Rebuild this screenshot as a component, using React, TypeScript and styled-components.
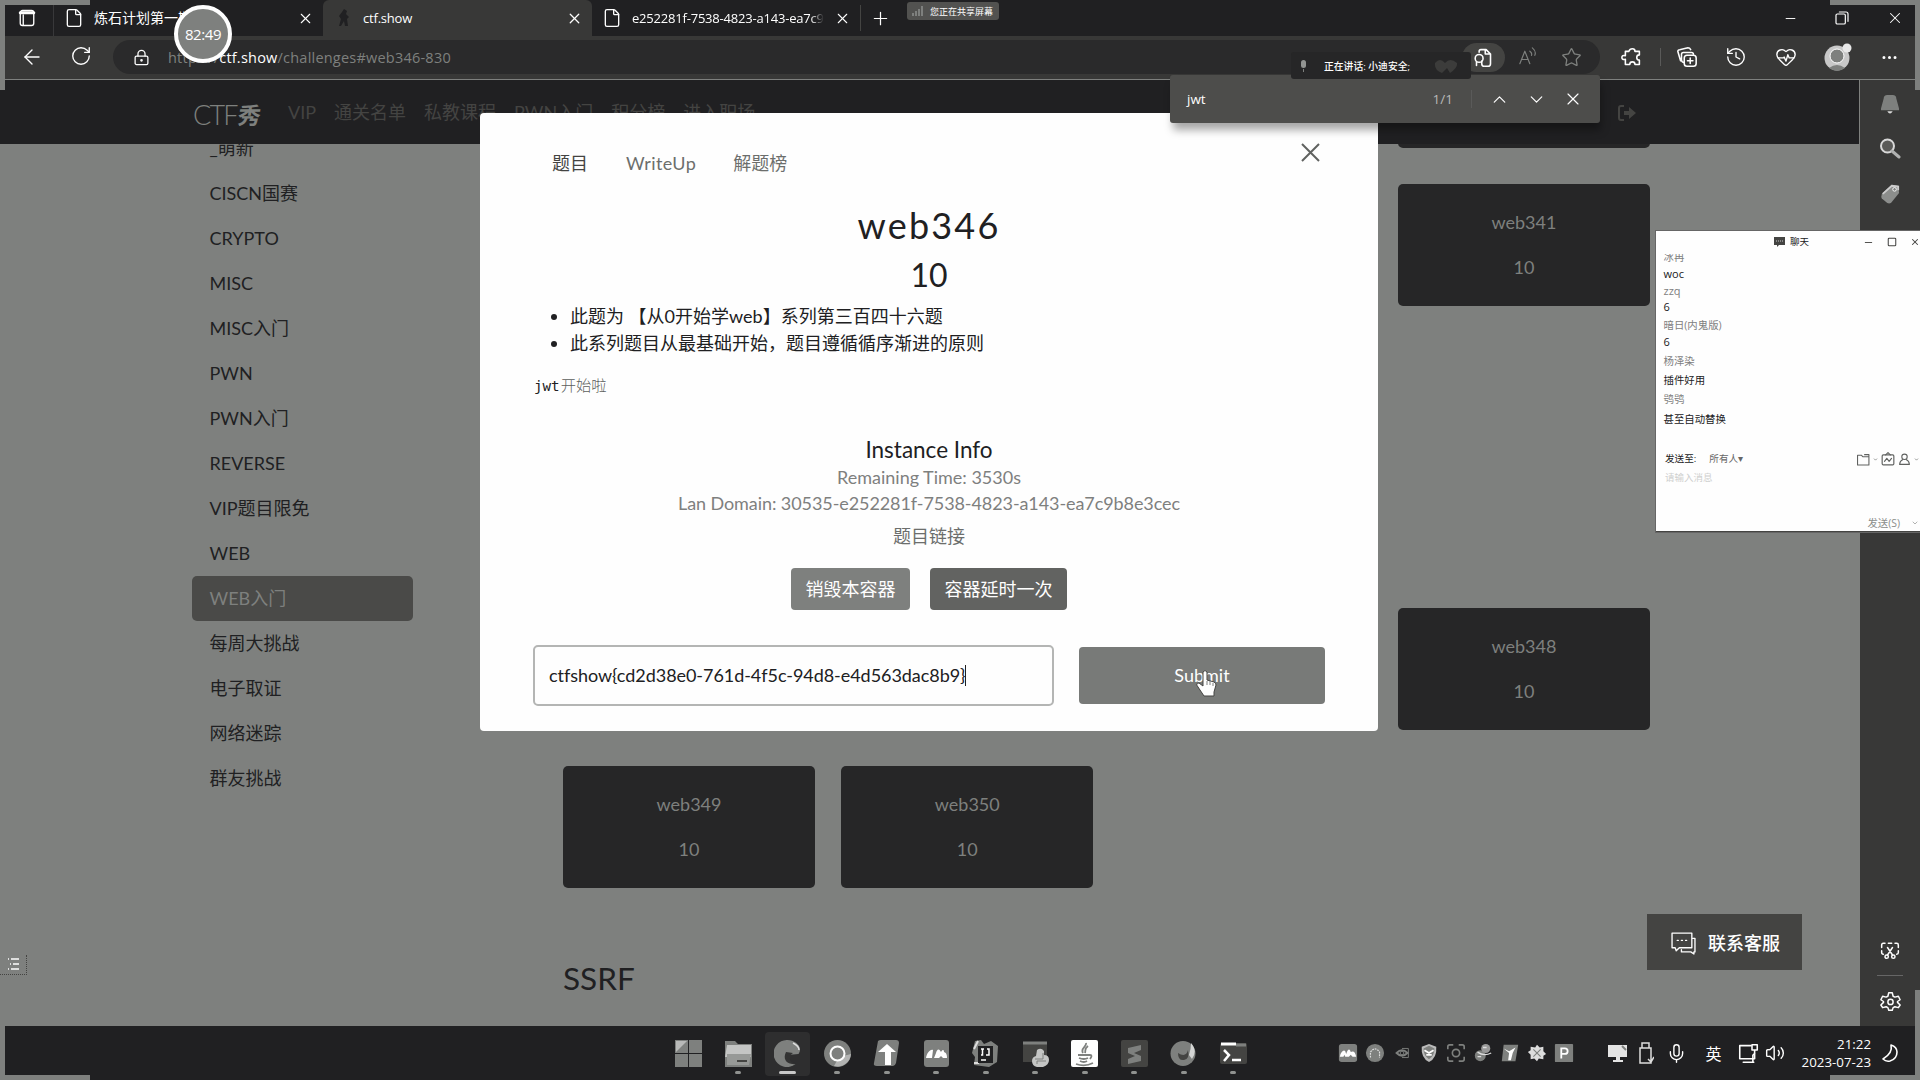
import React from "react";
import styled, { createGlobalStyle } from "styled-components";
import {
  File, X, Plus, ArrowLeft, RotateCw, LockKeyhole, Star, History, HeartPulse,
  Ellipsis, ChevronUp, ChevronDown, Minus, Mic, Volume2, Square,
} from "lucide-react";

const ink = "#202022";
const slate = "#444442";
const gray = "#7e807e";
const white = "#fefefe";
const ui = `"Open Sans", "Noto Sans CJK SC", sans-serif`;
const page = `Lato, "Noto Sans CJK SC", sans-serif`;

const Global = createGlobalStyle`
  * { box-sizing: border-box; }
  html, body { margin: 0; padding: 0; background: ${gray}; overflow: hidden; }
  button, input { font: inherit; border: 0; margin: 0; }
  svg { display: block; flex: none; }
`;

const Desktop = styled.div`
  position: relative;
  width: 1920px;
  height: 1080px;
  display: flex;
  flex-direction: column;
  overflow: hidden;
  background: ${gray};
  color: ${white};
  font-family: ${ui};
`;

const TabStrip = styled.header`
  display: flex;
  height: 36px;
  background: ${ink};
  align-items: stretch;
  font-size: 13px;
`;
const StripLead = styled.div`
  width: 54px;
  padding: 9px 0 0 18px;
  border-right: 1px solid #38383a;
`;
const Tab = styled.div<{ $w: number; $on?: boolean; $pad: number }>`
  display: flex;
  align-items: center;
  width: ${(p) => p.$w}px;
  padding: 0 9px 0 ${(p) => p.$pad}px;
  gap: 10px;
  background: ${(p) => (p.$on ? "#383837" : ink)};
  border-radius: ${(p) => (p.$on ? "6px 6px 0 0" : "0")};
`;
const TabTitle = styled.span<{ $fade?: boolean; $ls?: number; $size?: number }>`
  flex: 1;
  overflow: hidden;
  white-space: nowrap;
  line-height: 22px;
  font-size: ${(p) => p.$size ?? 13}px;
  letter-spacing: ${(p) => p.$ls ?? 0}px;
  mask-image: ${(p) => (p.$fade ? "linear-gradient(90deg,#000 93%,transparent)" : "none")};
`;
const StripAdd = styled.div`
  display: flex;
  align-items: center;
  width: 44px;
  height: 26px;
  margin-top: 5px;
  padding-left: 9px;
  border-left: 1px solid ${slate};
`;
const WindowButtons = styled.div`
  display: flex;
  align-items: center;
  gap: 36px;
  margin-left: auto;
  padding-right: 16px;
`;

const Toolbar = styled.div`
  display: flex;
  align-items: center;
  height: 44px;
  padding: 0 0 1px 20px;
  background: #383837;
  border-bottom: 1px solid ${gray};
`;
const NavButtons = styled.div`
  display: flex;
  width: 93px;
  gap: 26px;
`;
const AddressBar = styled.div`
  display: flex;
  flex: none;
  align-items: center;
  width: 1487px;
  height: 34px;
  padding: 0 18px 0 20px;
  border-radius: 17px;
  background: #2a2a2b;
`;
const Url = styled.span`
  margin: 1px 0 0 18px;
  color: ${gray};
  font-size: 14.5px;
  letter-spacing: 0.22px;
  line-height: 22px;
  b { color: ${white}; font-weight: 400; }
`;
const AddressTools = styled.div`
  display: flex;
  align-items: center;
  gap: 22px;
  margin-left: auto;
  color: ${gray};
`;
const FindChip = styled.div`
  display: flex;
  align-items: center;
  justify-content: center;
  width: 43px;
  height: 29px;
  margin-right: -8px;
  border-radius: 15px;
  background: ${slate};
  color: ${white};
`;
const ToolIcons = styled.div`
  display: grid;
  grid-template-columns: 22px 36px 18px 80px 20px 84px 18px;
  align-items: center;
  justify-items: center;
  height: 30px;
  padding-left: 20px;
`;
const Rule = styled.i`
  width: 1px;
  height: 18px;
  background: #5a5a59;
`;

const Body = styled.div`
  display: flex;
  height: 946px;
`;
const WebPage = styled.div`
  width: 1860px;
  border-right: 1px solid ${gray};
  background: ${gray};
  font-family: ${page};
  font-size: 18px;
  color: ${ink};
`;
const SiteNav = styled.nav`
  display: flex;
  align-items: center;
  height: 64px;
  padding: 1px 223px 0 193px;
  background: ${ink};
  color: ${slate};
  gap: 18px;
  line-height: 27px;
`;
const Logo = styled.div`
  display: flex;
  align-items: center;
  width: 77px;
  padding-top: 3px;
  color: ${gray};
  font-size: 27px;
  font-weight: 300;
  line-height: 27px;
  letter-spacing: -1.8px;
  em { font-family: "Noto Sans CJK SC"; font-style: normal; font-weight: 700; font-size: 23px; margin-left: 1px; transform: skewX(-8deg); }
`;
const LogOut = styled.div`
  margin-left: auto;
`;
const Columns = styled.div`
  display: flex;
  height: 882px;
  overflow: hidden;
`;
const Side = styled.aside`
  width: 221px;
  margin: -18px 0 0 192px;
`;
const SideItem = styled.div<{ $on?: boolean }>`
  height: 45px;
  padding: 9px 17.5px;
  line-height: 27px;
  border-radius: 5px;
  white-space: nowrap;
  background: ${(p) => (p.$on ? "#4a4a48" : "transparent")};
  color: ${(p) => (p.$on ? gray : ink)};
`;
const Board = styled.main`
  width: 1087px;
  margin-left: 150px;
`;
const CardGrid = styled.div`
  display: grid;
  grid-template-columns: repeat(4, 252px);
  column-gap: 26.3px;
  row-gap: 36px;
  grid-auto-rows: 122px;
`;
const FirstGrid = styled(CardGrid)`
  margin-top: -118px;
  height: 438px;
`;
const SecondGrid = styled(CardGrid)`
  margin-top: 144px;
`;
const Card = styled.article<{ $col: number; $row: number }>`
  grid-column: ${(p) => p.$col};
  grid-row: ${(p) => p.$row};
  display: flex;
  flex-direction: column;
  align-items: center;
  padding-top: 25px;
  gap: 18px;
  border-radius: 5px;
  background: #262627;
  color: ${gray};
  line-height: 27px;
`;
const Heading = styled.h3`
  margin: 71px 0 0;
  font-weight: 400;
  font-size: 31.5px;
  line-height: 38px;
`;
const EdgeBar = styled.aside`
  display: flex;
  flex-direction: column;
  align-items: center;
  flex: 1;
  padding: 14px 0 14px 0;
  background: #383837;
  gap: 23px;
`;
const EdgeBottom = styled.div`
  display: flex;
  flex-direction: column;
  align-items: center;
  gap: 15px;
  margin-top: auto;
`;
const EdgeRule = styled.i`
  width: 26px;
  height: 1px;
  background: #666;
`;

const Taskbar = styled.footer`
  display: flex;
  height: 54px;
  background: ${ink};
  padding-left: 664px;
`;
const Apps = styled.div`
  display: flex;
  padding-top: 6px;
`;
const AppSlot = styled.div<{ $on?: boolean }>`
  display: flex;
  flex-direction: column;
  align-items: center;
  width: 45px;
  height: 44px;
  margin: 0 2.25px;
  padding-top: 8px;
  border-radius: 4px;
  background: ${(p) => (p.$on ? "#2e2e2f" : "transparent")};
`;
const Dot = styled.i<{ $on?: boolean }>`
  width: ${(p) => (p.$on ? 17 : 6)}px;
  height: 3px;
  margin-top: 4px;
  border-radius: 2px;
  background: ${(p) => (p.$on ? "#c8c8c8" : "#909290")};
`;
const Tray = styled.div`
  display: flex;
  align-items: center;
  gap: 7px;
  margin-left: 80px;
`;
const Status = styled.div`
  display: grid;
  grid-template-columns: 20px 37px 25px 49px 20px 34px;
  align-items: center;
  justify-items: center;
  margin-left: 33px;
  font-size: 16px;
`;
const Clock = styled.time`
  margin-left: auto;
  padding: 9px 10px 0 0;
  text-align: right;
  font-size: 13.3px;
  line-height: 18px;
`;
const MoonSlot = styled.div`
  padding: 17px 21px 0 0;
`;

const Modal = styled.section`
  position: absolute;
  left: 480px;
  top: 113px;
  width: 898px;
  height: 618px;
  padding: 37px 53px 0;
  border-radius: 4px;
  background: ${white};
  color: ${ink};
  font-family: ${page};
  font-size: 18px;
  line-height: 27px;
`;
const ModalTop = styled.div`
  display: flex;
  padding-left: 19px;
  gap: 37px;
  color: #6c6e6c;
  span:first-child { color: ${slate}; }
  span:nth-child(2) { letter-spacing: 0.4px; margin-left: 1px; }
`;
const CloseSlot = styled.div`
  margin: -11px 0 0 auto;
  color: #606260;
`;
const Title = styled.h1`
  margin: 26px 0 0;
  text-align: center;
  font-weight: 400;
  font-size: 36px;
  letter-spacing: 2.2px;
  line-height: 44px;
`;
const Points = styled.h2`
  margin: 8px 0 0;
  text-align: center;
  font-weight: 400;
  font-size: 32px;
  line-height: 40px;
`;
const Notes = styled.ul`
  margin: 8px 0 0;
  padding-left: 37px;
`;
const Pre = styled.div`
  margin-top: 14px;
  height: 27px;
  padding-left: 1px;
  font-family: "DejaVu Sans Mono", monospace;
  font-size: 14.2px;
  span { margin-left: 1px; font-family: "Noto Sans CJK SC"; font-weight: 300; font-size: 15.3px; color: #5c5e5c; }
`;
const Info = styled.div`
  display: flex;
  flex-direction: column;
  align-items: center;
  margin-top: 38px;
  color: ${gray};
  strong { color: ${ink}; font-weight: 400; font-size: 22.5px; line-height: 27px; margin-bottom: 1px; }
  a { margin-top: 7px; color: #6c6e6c; }
`;
const Line = styled.span<{ $ls?: number }>`
  line-height: 26px;
  letter-spacing: ${(p) => p.$ls ?? 0}px;
`;
const Actions = styled.div`
  display: flex;
  justify-content: center;
  gap: 20px;
  margin-top: 18px;
`;
const Action = styled.button<{ $dark?: boolean }>`
  height: 42px;
  padding: 0 14.5px;
  border-radius: 4px;
  color: ${white};
  background: ${(p) => (p.$dark ? "#626361" : gray)};
`;
const FlagRow = styled.div`
  display: flex;
  align-items: center;
  justify-content: space-between;
  margin-top: 35px;
`;
const Flag = styled.div`
  display: flex;
  align-items: center;
  width: 521px;
  height: 61px;
  padding-left: 14px;
  border: 2px solid #b4b5b4;
  border-radius: 5px;
  letter-spacing: -0.05px;
`;
const Caret = styled.i`
  width: 1px;
  height: 21px;
  background: ${ink};
`;
const Submit = styled.button`
  width: 246px;
  height: 57px;
  border-radius: 4px;
  background: #787a78;
  color: ${white};
`;

const FindBar = styled.div`
  position: absolute;
  left: 1170px;
  top: 75px;
  width: 430px;
  height: 48px;
  display: flex;
  align-items: center;
  padding: 0 17px;
  border-radius: 3px;
  background: #4d4d4b;
  box-shadow: 2px 8px 9px -1px rgba(0, 0, 0, 0.35);
  font-size: 13.5px;
`;
const Count = styled.span`
  margin: 0 18px 0 auto;
  color: #b8b8b8;
`;
const FindIcons = styled.div`
  display: flex;
  gap: 16px;
  padding-left: 17px;
`;
const Speaking = styled.div`
  position: absolute;
  left: 1291px;
  top: 52px;
  width: 180px;
  height: 27px;
  display: flex;
  align-items: center;
  gap: 14px;
  padding-left: 6px;
  border-radius: 3px;
  background: #262627;
  font-size: 9.8px;
  font-weight: 500;
  span { width: 84px; white-space: nowrap; }
`;
const SharePill = styled.div`
  position: absolute;
  left: 907px;
  top: 2px;
  width: 92px;
  height: 18px;
  display: flex;
  align-items: center;
  gap: 6px;
  padding-left: 5px;
  border-radius: 3px;
  background: #525250;
  font-size: 9px;
`;
const Timer = styled.div`
  position: absolute;
  left: 174px;
  top: 5px;
  width: 58px;
  height: 58px;
  border: 4px solid ${white};
  border-radius: 50%;
  background: ${gray};
  text-align: center;
  font-size: 15px;
  line-height: 50px;
  letter-spacing: -0.4px;
`;
const Contact = styled.button`
  position: absolute;
  left: 1647px;
  top: 914px;
  width: 155px;
  height: 56px;
  display: flex;
  align-items: center;
  gap: 12px;
  padding: 0 0 0 24px;
  background: ${slate};
  color: ${white};
  font-family: ${page};
  font-size: 18px;
  font-weight: 500;
`;
const ListToggle = styled.div`
  position: absolute;
  left: 0;
  top: 955px;
  width: 27px;
  height: 20px;
  padding: 3px 0 0 8px;
  border-right: 1px dotted ${slate};
  border-bottom: 1px dotted ${slate};
`;
const Corner = styled.i<{ $v: "top" | "bottom"; $h: "left" | "right" }>`
  position: absolute;
  ${(p) => p.$v}: 0;
  ${(p) => p.$h}: 0;
  width: 90px;
  height: 90px;
  border: 0 solid ${gray};
  border-${(p) => p.$v}-width: 5px;
  border-${(p) => p.$h}-width: 5px;
`;
const Hand = styled.svg`
  position: absolute;
  left: 1195px;
  top: 669px;
`;

const Chat = styled.section`
  position: absolute;
  left: 1656px;
  top: 231px;
  width: 264px;
  height: 301px;
  display: flex;
  flex-direction: column;
  background: ${white};
  color: ${ink};
  font-size: 10.4px;
  line-height: 14px;
  border-bottom: 1px solid ${slate};
  outline: 1px solid #666;
`;
const ChatHead = styled.div`
  display: flex;
  align-items: center;
  height: 22px;
  padding-left: 118px;
  gap: 5px;
  font-size: 9.5px;
`;
const ChatWindow = styled.div`
  display: flex;
  gap: 13px;
  margin-left: auto;
  color: ${slate};
`;
const Messages = styled.div`
  height: 190px;
  padding-left: 7.5px;
  overflow: hidden;
`;
const Message = styled.div<{ $h: number; $name?: boolean; $latin?: boolean }>`
  height: ${(p) => p.$h}px;
  line-height: ${(p) => p.$h - (p.$latin ? 2 : 0)}px;
  font-size: ${(p) => (p.$latin ? 11 : 10.4)}px;
  color: ${(p) => (p.$name ? "#7e807e" : ink)};
  &:first-child { margin-top: -5px; clip-path: inset(6px 0 0 0); }
`;
const SendTo = styled.div`
  display: flex;
  align-items: center;
  height: 18px;
  margin-top: 7px;
  padding: 0 1px 0 9px;
  font-size: 9.6px;
  span { margin-left: 13px; color: #666; }
`;
const SendTools = styled.div`
  display: flex;
  align-items: center;
  gap: 3px;
  margin-left: auto;
  color: #606260;
`;
const Hint = styled.div`
  padding-left: 9px;
  margin-top: 3px;
  font-size: 9.5px;
  color: #cfd0cf;
`;
const Send = styled.div`
  display: flex;
  align-items: center;
  gap: 11px;
  margin: auto 1px 1px auto;
  color: #8b8d8b;
`;

const Svg = ({ s = 24, children, sw = 1.4 }: { s?: number; children: React.ReactNode; sw?: number }) => (
  <svg width={s} height={s} viewBox="0 0 24 24" fill="none" stroke="currentColor" strokeWidth={sw} strokeLinecap="round" strokeLinejoin="round">{children}</svg>
);

const appIcons = [
  <g fill={gray}><path d="M0 0h13v13H0zM14 0h13v13H14zM0 14h13v13H0zM14 14h13v13H14z" /><path d="M1 1h11L1 12z" fill="#b8b9b8" /></g>,
  <g><path d="M0 1h10l3 3h14v23H0z" fill={gray} /><path d="M2 5h24v12H0z" fill="#c4c5c4" /><path d="M2 14h24l-2 11H2z" fill="#979997" /><path d="M12 21h10" stroke={slate} strokeWidth="2" /></g>,
  <g><path d="M13.500 0a13.500 13.500 0 1 0 8 24c-5 1-9-3-8-9l11-1c5-7-3-14-11-14z" fill={gray} /><path d="M12 12c-4 8 2 14 10 11-8 1-7-8-3-10z" fill="#333" /><path d="M19 3q6 3 6 7" stroke="#ddd" strokeWidth="1.500" fill="none" /></g>,
  <g><circle cx="13.500" cy="13.500" r="13.500" fill={gray} /><path d="M27 14a13.500 13.500 0 0 1-17 12l5-9z" fill="#b2b3b2" /><circle cx="13.500" cy="13.500" r="7" fill={gray} stroke={white} strokeWidth="2" /></g>,
  <g><path d="M5 1q1-1 3-1h15q3 0 3 3l-3 20q-1 3-3 3H4q-4 0-3-3z" fill={gray} /><path d="M14 4l9 8h-5v13h-6V12H5z" fill={white} /></g>,
  <g><rect x="1" y="0" width="25" height="27" rx="3" fill={gray} /><path d="M3 18c1-5 4-9 7-8l-1 8zM11 18l2-5c1-4 3-5 5-1 2-3 3-2 3 0 3 1 3 4 3 6h-4l-2-2-2 2z" fill={white} /></g>,
  <g><path d="M3 1l6-1 3 4 7-3 7 5-1 16-8 5-15-2 1-8-3-4z" fill={gray} /><path d="M2 9L6 1M2 23h5" stroke="#ddd" strokeWidth="2" /><rect x="6" y="6" width="15" height="17" fill={ink} /><path d="M9 9h3m-1.500 0v6H9m6-6h2v6h-3M9 20h5" stroke={white} strokeWidth="1.500" fill="none" /></g>,
  <g><rect x="1" y="2" width="24" height="20" fill={slate} /><path d="M1 3h24" stroke={gray} strokeWidth="3" /><path d="M15 10q4-3 7 1v4q5 0 5 5t-6 7h-6q-5-1-5-6 0-4 4-5z" fill="#c4c5c4" /><path d="M13 19h8v-6M15 24v-3h9" stroke={gray} fill="none" /></g>,
  <g><rect width="27" height="27" rx="2" fill={white} /><path d="M15 3c1 4-6 5-3 10m5-7c-4 3-2 4-3 7M7 15h12q3 0 0 4M8 18q5 2 9 0M9 21q4 2 7 0M5 24q9 3 17-1" stroke={gray} strokeWidth="1.800" fill="none" /></g>,
  <g><rect width="27" height="27" rx="2" fill={slate} /><path d="M20 5v5l-7 3 7 3v5L7 24v-5l7-3-7-3V8z" fill={gray} /></g>,
  <g><circle cx="13" cy="13.500" r="12.500" fill={gray} /><path d="M21 3q7 8 1 16l-3-4q2-6 2-12z" fill="#d4d5d4" /><path d="M8 13q8 5 10-3 2 9-4 10t-6-7z" fill={slate} /></g>,
  <g><rect y="3" width="27" height="21" rx="2" fill={slate} /><path d="M1 4h15" stroke={white} strokeWidth="3" /><path d="M16 5h10" stroke={gray} strokeWidth="3" /><path d="M4 10l5 5-5 6M12 20h9" stroke={white} strokeWidth="2.500" fill="none" /></g>,
];

const trayIcons = [
  <g><rect width="20" height="20" rx="3" fill={gray} /><path d="M1 14c1-5 4-8 6-6l1 3c2-6 4-6 5-2 3-2 5 0 6 5h-4l-2-2-2 2H7l-1-2-1 2z" fill={white} /></g>,
  <g><circle cx="10" cy="10" r="10" fill={gray} /><path d="M5 15V9q5-7 10 0v6" stroke="#ddd" strokeWidth="1.300" fill="none" strokeDasharray="2 1" /></g>,
  <g stroke={gray} fill="none"><path d="M4 10q6-6 12 0-6 6-12 0z" strokeWidth="2" /><circle cx="10" cy="10" r="2" /><path d="M10 5h7v10h-7" /></g>,
  <g><path d="M10 0l8 3q1 12-8 17Q1 15 2 3z" fill="#bbb" /><path d="M10 2l6 3q0 8-6 12Q4 13 4 5z" fill={gray} /><path d="M5 7l5 3 5-3M7 12h6" stroke={white} strokeWidth="2" fill="none" /></g>,
  <g stroke={gray} strokeWidth="1.800" fill="none"><path d="M1 6V3q0-2 2-2h4M13 1h4q2 0 2 2v3M19 14v3q0 2-2 2h-4M7 19H3q-2 0-2-2v-3" /><circle cx="10" cy="10" r="4" /></g>,
  <g><circle cx="7" cy="13" r="6" fill={gray} /><circle cx="13" cy="5" r="5" fill="#999" /><path d="M4 9q7 5 15 1M10 4h4M4 14h4" stroke="#ddd" strokeWidth="1.500" fill="none" /></g>,
  <g><path d="M3 1h16l-3 18H1z" fill={gray} /><path d="M3 5l6 3 7-4-3 6-2 8H8l1-8z" fill={white} /></g>,
  <g><path d="M10 1l3 3 4-1v5l3 3-3 2v4l-5-1-2 3-3-3-4 1v-5l-3-3 3-2V3l5 1z" fill="#ddd" /><path d="M6 6l8 8M14 6l-8 8" stroke={gray} strokeWidth="1.200" /></g>,
  <g><rect width="20" height="20" rx="1" fill={gray} /><path d="M7 16V5h4q3 0 3 3t-3 3H7" stroke={white} strokeWidth="2" fill="none" /></g>,
];

const categories = ["_萌新", "CISCN国赛", "CRYPTO", "MISC", "MISC入门", "PWN", "PWN入门", "REVERSE", "VIP题目限免", "WEB", "WEB入门", "每周大挑战", "电子取证", "网络迷踪", "群友挑战"];
const links = ["VIP", "通关名单", "私教课程", "PWN入门", "积分榜", "进入职场"];
const messages: [string, number, boolean][] = [
  ["冰冉", 18, true], ["woc", 17, false], ["zzq", 17, true], ["6", 16, false], ["暗日(内鬼版)", 18, true],
  ["6", 18, false], ["杨泽染", 18, true], ["插件好用", 20, false], ["鸮鸮", 19, true], ["甚至自动替换", 20, false],
];

const ChallengeCard = ({ name, col, row }: { name: string; col: number; row: number }) => (
  <Card $col={col} $row={row}><span>{name}</span><span>10</span></Card>
);

export default function App() {
  return (
    <>
      <Global />
      <Desktop>
        <TabStrip>
          <StripLead><Svg s={18} sw={1.8}><rect x="3" y="2" width="18" height="20" rx="3" /><path d="M3 5h18" strokeWidth="4" /><path d="M7 8v13" /></Svg></StripLead>
          <Tab $w={269} $pad={10}><File size={20} strokeWidth={1.6} /><TabTitle $size={14}>炼石计划第一期</TabTitle><X size={17} strokeWidth={1.5} /></Tab>
          <Tab $w={269} $pad={14} $on>
            <svg width="16" height="20" viewBox="0 0 16 20"><path d="M7 1l3 2-1 3 3 3-2 2 1 7H8l-1-5-3 5H2l2-7-2-3 3-4z" fill={ink} /></svg>
            <TabTitle $ls={-0.2}>ctf.show</TabTitle><X size={17} strokeWidth={1.8} />
          </Tab>
          <Tab $w={268} $pad={10}><File size={20} strokeWidth={1.6} /><TabTitle $fade $ls={-0.2}>e252281f-7538-4823-a143-ea7c9b8e</TabTitle><X size={17} strokeWidth={1.5} /></Tab>
          <StripAdd><Plus size={21} strokeWidth={1.4} /></StripAdd>
          <WindowButtons>
            <Minus size={15} strokeWidth={1.5} />
            <Svg s={16} sw={1.8}><rect x="3" y="6" width="14" height="15" rx="2" /><path d="M8 3h10q3 0 3 3v11" /></Svg>
            <X size={18} strokeWidth={1.4} />
          </WindowButtons>
        </TabStrip>

        <Toolbar>
          <NavButtons><ArrowLeft size={24} strokeWidth={1.4} /><RotateCw size={22} strokeWidth={1.5} /></NavButtons>
          <AddressBar>
            <LockKeyhole size={17} strokeWidth={1.8} />
            <Url>https://<b>ctf.show</b>/challenges#web346-830</Url>
            <AddressTools>
              <FindChip><Svg s={21} sw={1.8}><path d="M7 6V5q0-2 2-2h6l5 5v11q0 3-3 3h-3M14 3v5h5" /><circle cx="7" cy="13" r="4.500" /><path d="M4 17v4M10 16v3q0 3 3 3" /></Svg></FindChip>
              <Svg s={20}><path d="M1 20L7 5l6 15M3 15h8M13 5q3 2 2 5M16 1q5 4 3 9" /></Svg>
              <Star size={21} strokeWidth={1.5} />
            </AddressTools>
          </AddressBar>
          <ToolIcons>
            <Svg s={21} sw={1.8}><path d="M9 5H5v5q-4-1-4 2t4 2v6h5q0-3 3-3t3 3h5v-5q-3 0-3-3t3-3V5h-5q0-3-3-3T9 5z" /></Svg>
            <Rule />
            <Svg s={22} sw={1.7}><path d="M5 16L2 6q0-2 2-2l9-2q2 0 3 2M9 18q-3 0-3-3V9q0-2 2-2h9q2 0 2 2" /><rect x="9" y="10" width="13" height="12" rx="3" /><path d="M15.500 13v6M12.500 16h6" /></Svg>
            <History size={22} strokeWidth={1.5} />
            <HeartPulse size={22} strokeWidth={1.5} />
            <svg width="28" height="30" viewBox="0 0 28 30"><circle cx="13" cy="16" r="12.500" fill="#c8c8c8" /><circle cx="23" cy="6" r="4.500" fill="#e8e8e8" /><circle cx="13" cy="14" r="7" fill={gray} stroke={white} /><path d="M5 26q8-6 16 0-8 6-16 0z" fill={gray} /></svg>
            <Ellipsis size={19} strokeWidth={1.8} />
          </ToolIcons>
        </Toolbar>

        <Body>
          <WebPage>
            <SiteNav>
              <Logo>CTF<em>秀</em></Logo>
              {links.map((l) => <span key={l}>{l}</span>)}
              <LogOut><svg width="18" height="18" viewBox="0 0 18 18"><path d="M6 2H3Q1 2 1 4v10q0 2 2 2h3" fill="none" stroke={slate} strokeWidth="2" /><path d="M6 7h5V3l7 6-7 6v-4H6z" fill={slate} /></svg></LogOut>
            </SiteNav>
            <Columns>
              <Side>{categories.map((c) => <SideItem key={c} $on={c === "WEB入门"}>{c}</SideItem>)}</Side>
              <Board>
                <FirstGrid>
                  <Card $col={4} $row={1} />
                  <ChallengeCard name="web341" col={4} row={2} />
                </FirstGrid>
                <SecondGrid>
                  <ChallengeCard name="web348" col={4} row={1} />
                  <ChallengeCard name="web349" col={1} row={2} />
                  <ChallengeCard name="web350" col={2} row={2} />
                </SecondGrid>
                <Heading>SSRF</Heading>
              </Board>
            </Columns>
          </WebPage>
          <EdgeBar>
            <svg width="18" height="20" viewBox="0 0 20 22"><path d="M7 1h6q4 0 4 4l3 11v2H0v-2L3 5q0-4 4-4z" fill={gray} /><path d="M7 19h6q-3 5-6 0z" fill="#d8d8d8" /></svg>
            <svg width="22" height="22" viewBox="0 0 22 22" fill="none"><circle cx="8.500" cy="9" r="6.500" fill="#5a5a58" stroke="#d8d8d8" strokeWidth="2" /><path d="M13 14l7 6" stroke="#b0b1b0" strokeWidth="3" strokeLinecap="round" /></svg>
            <svg width="20" height="22" viewBox="0 0 22 24"><path d="M2 13L13 3l7 1 1 8-9 11q-2 1-4 0l-6-5q-1-2 0-5z" fill="#8c8e8c" /><path d="M3 13l10-9 7 1v4" stroke="#ccc" strokeWidth="2" fill="none" /><circle cx="16" cy="8" r="2" fill={gray} stroke={white} /></svg>
            <EdgeBottom>
              <Svg s={20} sw={1.8}><path d="M4 17q-2 0-2-2v-2M2 9V6q0-2 2-2h2M10 4h4M18 4h2q2 0 2 2v3M22 13v2q0 2-2 2M9 9l6 9M15 9l-6 9" /><circle cx="8" cy="20" r="2" /><circle cx="16" cy="20" r="2" /></Svg>
              <EdgeRule />
              <Svg s={21} sw={1.7}><path d="M10 2h4l1 4 2 1 4-1 2 4-3 2v1l3 3-2 3-4-1-2 1-1 3h-4l-1-3-2-1-4 1-2-3 3-3v-1l-3-2 2-4 4 1 2-1z" /><circle cx="12" cy="12.500" r="3" /></Svg>
            </EdgeBottom>
          </EdgeBar>
        </Body>

        <Taskbar>
          <Apps>
            {appIcons.map((icon, i) => (
              <AppSlot key={i} $on={i === 2}>
                <svg width="27" height="27" viewBox="0 0 27 27">{icon}</svg>
                {i > 0 && <Dot $on={i === 2} />}
              </AppSlot>
            ))}
          </Apps>
          <Tray>{trayIcons.map((icon, i) => <svg key={i} width="20" height="20" viewBox="-0.5 -1 21 22">{icon}</svg>)}</Tray>
          <Status>
            <svg width="19" height="18" viewBox="0 0 19 18"><path d="M0 1h19v12H0zM8 13h4v3h3v2H5v-2h3z" fill="#e4e4e4" /><path d="M14 2l4 4" stroke={gray} strokeWidth="2" /></svg>
            <svg width="16" height="22" viewBox="0 0 16 22" fill="none" stroke="#ddd" strokeWidth="1.500"><path d="M4 6V1h7v5M2 6h11v15H2zM10 17l3 3 3-5" /></svg>
            <Mic size={21} strokeWidth={1.6} />
            <span>英</span>
            <Svg s={21} sw={1.8}><path d="M15 3H2v15h17v-6M6 22h12" /><path d="M16 2h6v6h-6zM19 8v3q0 2-2 3v8" /></Svg>
            <Volume2 size={20} strokeWidth={1.7} />
          </Status>
          <Clock>21:22<br />2023-07-23</Clock>
          <MoonSlot>
            <svg width="18" height="20" viewBox="0 0 18 20"><path d="M10 2q2 8-8 14 3 3 7 2 7-2 7-9 0-5-6-7z" fill="none" stroke={white} strokeWidth="1.600" strokeLinejoin="round" /></svg>
          </MoonSlot>
        </Taskbar>

        <Modal>
          <ModalTop>
            <span>题目</span><span>WriteUp</span><span>解题榜</span>
            <CloseSlot><svg width="28" height="27" viewBox="0 0 28 27"><path d="M5 5l17 17M22 5L5 22" stroke="currentColor" strokeWidth="2" /></svg></CloseSlot>
          </ModalTop>
          <Title>web346</Title>
          <Points>10</Points>
          <Notes>
            <li>此题为 【从0开始学web】系列第三百四十六题</li>
            <li>此系列题目从最基础开始，题目遵循循序渐进的原则</li>
          </Notes>
          <Pre>jwt<span>开始啦</span></Pre>
          <Info>
            <strong>Instance Info</strong>
            <Line>Remaining Time: 3530s</Line>
            <Line $ls={-0.08}>Lan Domain: 30535-e252281f-7538-4823-a143-ea7c9b8e3cec</Line>
            <a>题目链接</a>
          </Info>
          <Actions><Action>销毁本容器</Action><Action $dark>容器延时一次</Action></Actions>
          <FlagRow>
            <Flag>ctfshow&#123;cd2d38e0-761d-4f5c-94d8-e4d563dac8b9&#125;<Caret /></Flag>
            <Submit>Submit</Submit>
          </FlagRow>
        </Modal>

        <FindBar>
          <span>jwt</span><Count>1/1</Count><Rule />
          <FindIcons><ChevronUp size={21} strokeWidth={1.4} /><ChevronDown size={21} strokeWidth={1.4} /><X size={20} strokeWidth={1.4} /></FindIcons>
        </FindBar>
        <Speaking>
          <svg width="13" height="14" viewBox="0 0 13 14"><rect x="4" y="1" width="5" height="8" rx="2.500" fill="#929492" /><path d="M6.500 10v3" stroke={gray} /></svg>
          <span>正在讲话: 小迪安全;</span>
          <svg width="40" height="16" viewBox="0 0 40 16"><path d="M13 5q5-6 10 0 5-6 12 0 1 5-7 10l-3-5-5 5q-8-3-7-10z" fill="#3c3c3b" /></svg>
        </Speaking>
        <SharePill>
          <svg width="12" height="10" viewBox="0 0 12 10"><path d="M1 10V7M4 10V5M7 10V3M10 10V0" stroke={gray} strokeWidth="2" /></svg>
          <span>您正在共享屏幕</span>
        </SharePill>
        <Timer>82:49</Timer>
        <Contact>
          <Svg s={25} sw={1.3}><path d="M1 3h19v14H8l-3 3-1-3H1zM21 8h2v13h-1v2l-3-2h-9v-2M6 10h1M10 10h1M14 10h1" /></Svg>
          联系客服
        </Contact>
        <ListToggle><svg width="12" height="12" viewBox="0 0 12 12"><path d="M3 1h8M5 6h6M3 11h8M0 1h1M2 6h1M0 11h1" stroke={white} strokeWidth="1.300" /></svg></ListToggle>

        <Chat>
          <ChatHead>
            <svg width="11" height="10" viewBox="0 0 11 10"><path d="M0 0h11v8H5l-2 2V8H0z" fill={slate} /><path d="M2 4h7" stroke="#ccc" strokeDasharray="1 1" /></svg>
            聊天
            <ChatWindow><Minus size={11} strokeWidth={2} /><Square size={10} strokeWidth={2.5} /><X size={10} strokeWidth={2.5} /></ChatWindow>
          </ChatHead>
          <Messages>{messages.map(([text, h, name], i) => <Message key={i} $h={h} $name={name} $latin={/^\w+$/.test(text)}>{text}</Message>)}</Messages>
          <SendTo>
            发送至:<span>所有人▾</span>
            <SendTools>
              <Svg s={13} sw={2}><path d="M1 4h7l3 3h11v15H1zM14 3h8v3" /></Svg><ChevronDown size={5} strokeWidth={3} />
              <Svg s={14} sw={2}><rect x="2" y="5" width="20" height="17" rx="2" /><path d="M8 5l4-4 4 4M6 16l4-5 4 5 4-5" /></Svg>
              <Svg s={13} sw={2}><circle cx="12" cy="7" r="5" /><path d="M9 12q-6 3-6 9h18q0-6-6-9" /></Svg><ChevronDown size={5} strokeWidth={3} />
            </SendTools>
          </SendTo>
          <Hint>请输入消息</Hint>
          <Send>发送(S)<ChevronDown size={8} strokeWidth={2} /></Send>
        </Chat>

        <Hand width="22" height="28" viewBox="0 0 22 28"><path d="M8 14V3q2-3 4 0v8l7 2q2 1 2 3l-2 7v4H9L3 18q-3-4 1-4l4 3z" fill={white} stroke={slate} /><path d="M12 12v4M15 12v4M18 14v3" stroke={gray} /></Hand>
        <Corner $v="top" $h="left" /><Corner $v="top" $h="right" /><Corner $v="bottom" $h="left" /><Corner $v="bottom" $h="right" />
      </Desktop>
    </>
  );
}
